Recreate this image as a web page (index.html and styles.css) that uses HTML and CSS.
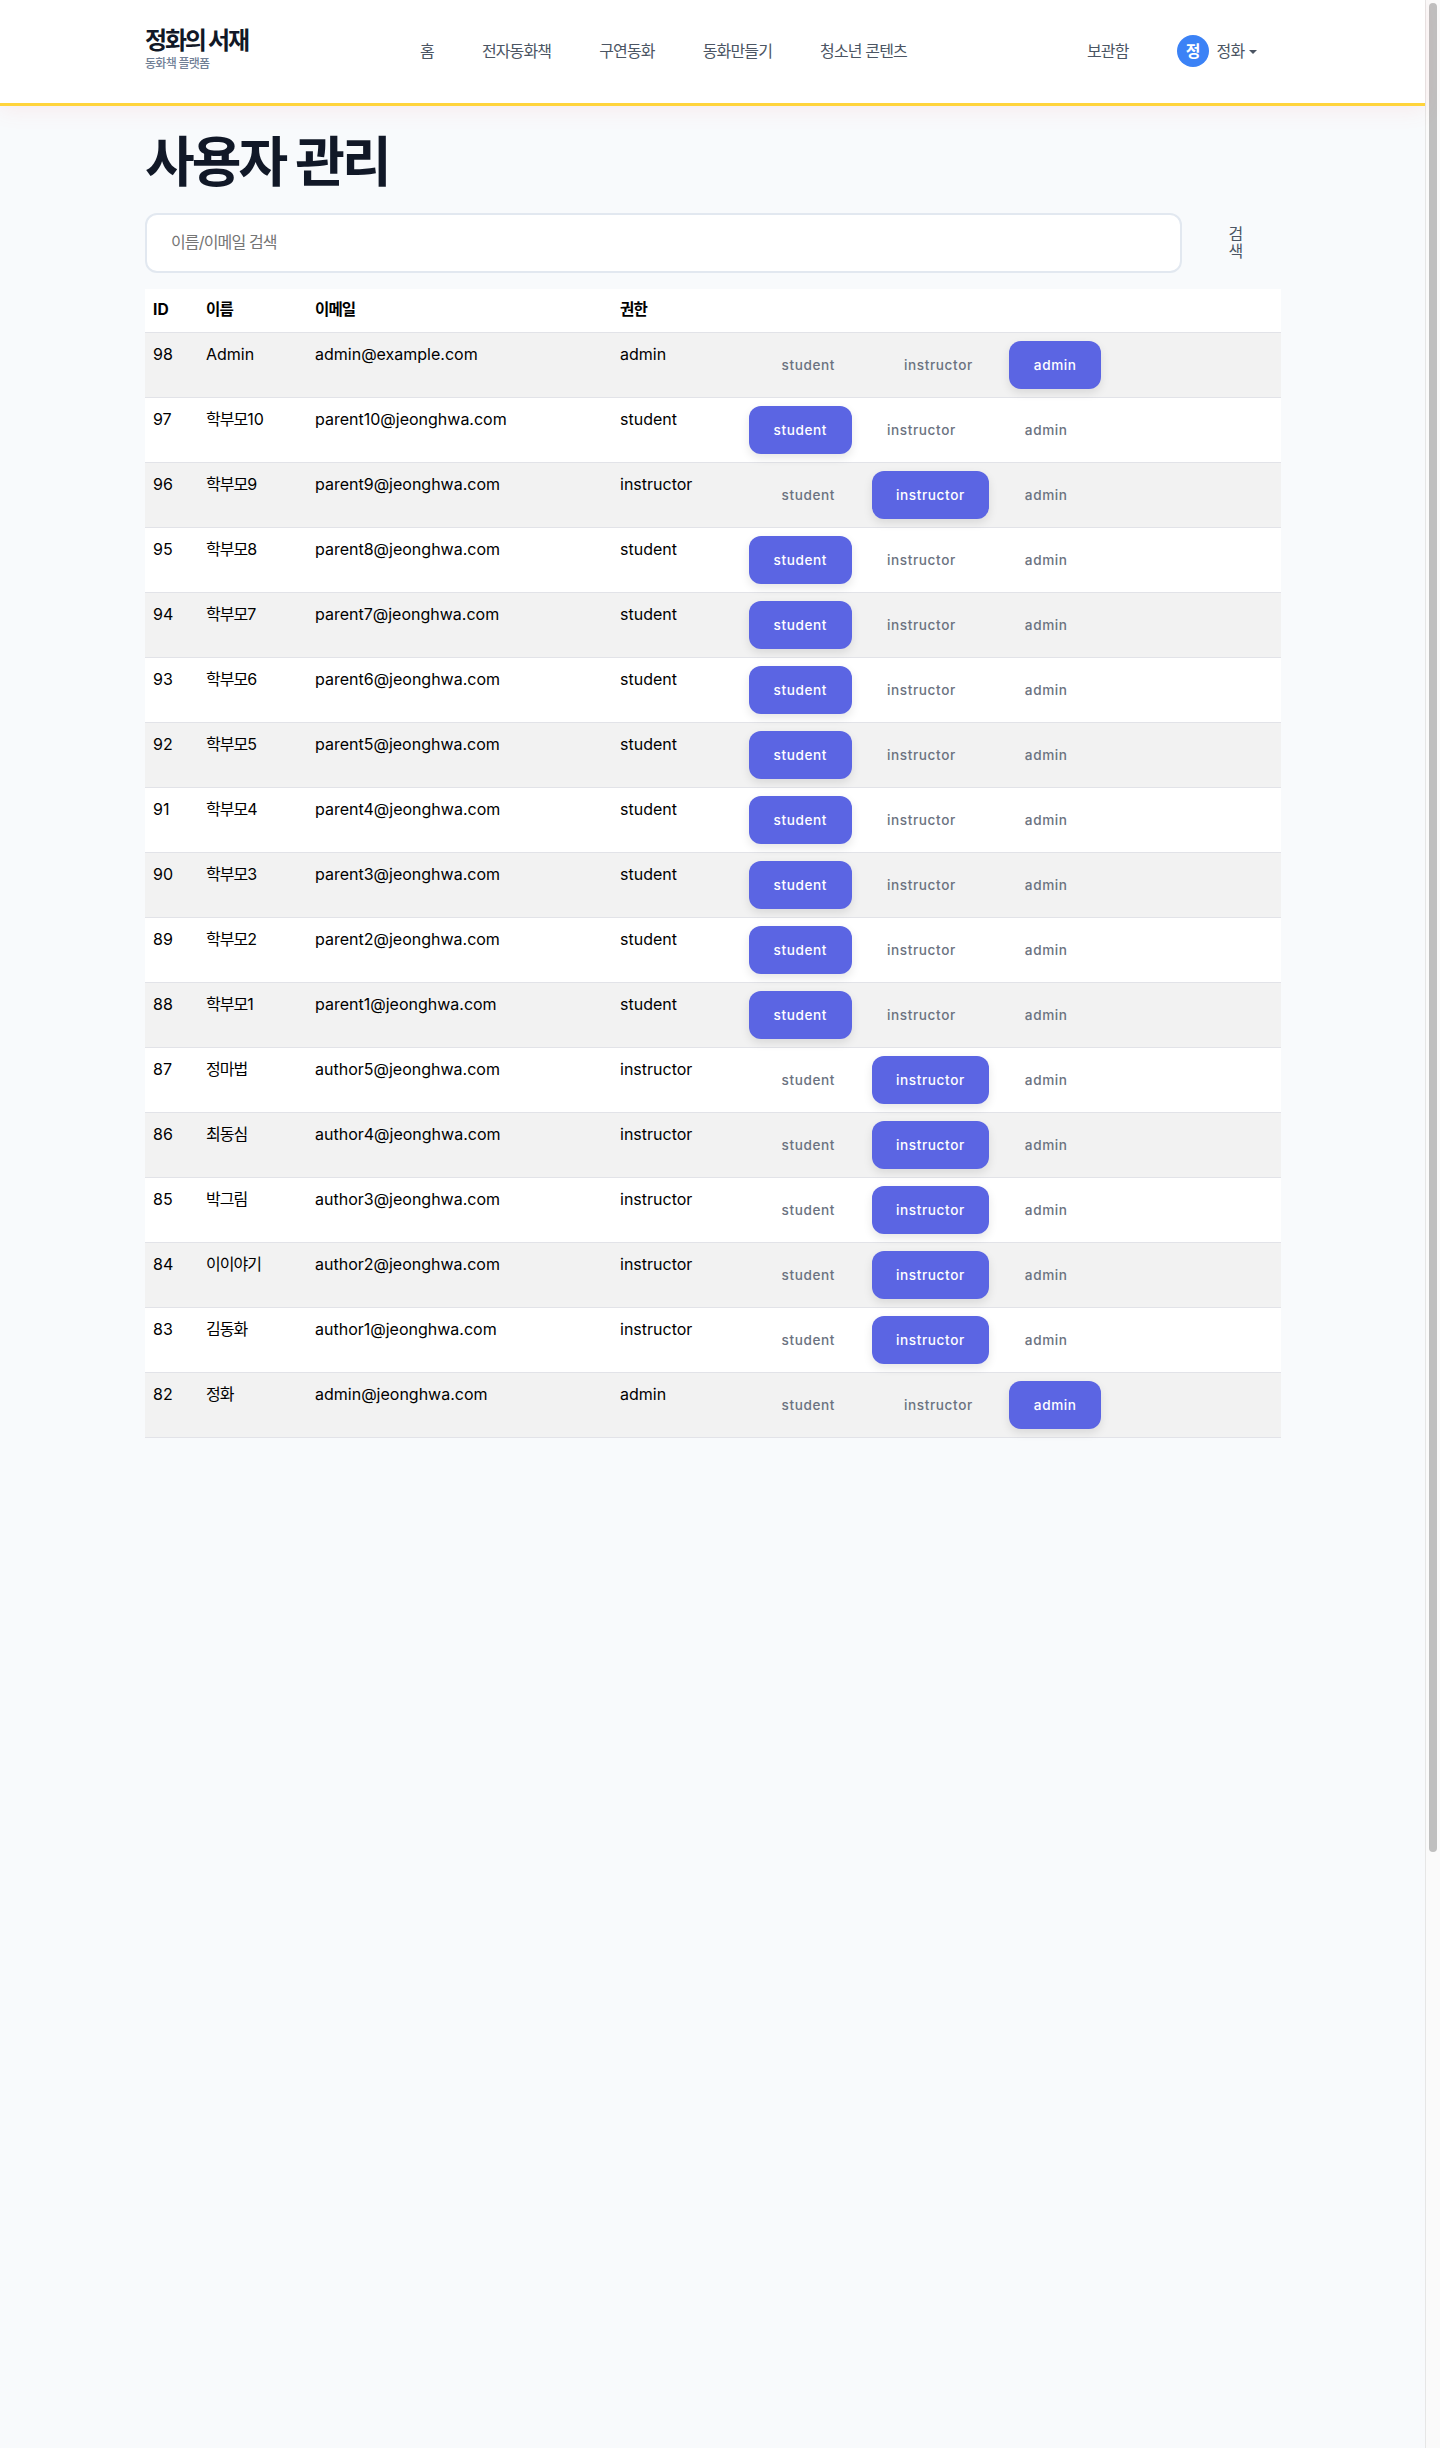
FILE: index.html
```html
<!DOCTYPE html>
<html lang="ko">
<head>
<meta charset="utf-8">
<title>사용자 관리</title>
<link rel="stylesheet" href="styles.css">
</head>
<body>
<div class="shell">
  <div class="page">
    <header class="header">
      <div class="brand">
        <div class="brand-title">정화의 서재</div>
        <div class="brand-sub">동화책 플랫폼</div>
      </div>
      <nav class="nav">
        <a>홈</a><a>전자동화책</a><a>구연동화</a><a>동화만들기</a><a>청소년 콘텐츠</a>
      </nav>
      <div class="user-area">
        <a class="library">보관함</a>
        <span class="avatar">정</span>
        <span class="user-name">정화</span>
        <span class="caret"></span>
      </div>
    </header>
    <main class="content">
      <h1 class="title">사용자 관리</h1>
      <form class="search">
        <input class="search-input" type="text" placeholder="이름/이메일 검색">
        <button class="search-btn" type="button">검색</button>
      </form>
      <table class="users">
        <colgroup><col class="c-id"><col class="c-name"><col class="c-email"><col class="c-role"><col></colgroup>
        <thead><tr><th>ID</th><th class="ko">이름</th><th class="ko">이메일</th><th class="ko">권한</th><th></th></tr></thead>
        <tbody>
          <tr><td>98</td><td>Admin</td><td>admin@example.com</td><td>admin</td><td class="actions"><button class="rb">student</button><button class="rb">instructor</button><button class="rb on">admin</button></td></tr>
          <tr><td>97</td><td><span class="ko">학부모</span>10</td><td>parent10@jeonghwa.com</td><td>student</td><td class="actions"><button class="rb on">student</button><button class="rb">instructor</button><button class="rb">admin</button></td></tr>
          <tr><td>96</td><td><span class="ko">학부모</span>9</td><td>parent9@jeonghwa.com</td><td>instructor</td><td class="actions"><button class="rb">student</button><button class="rb on">instructor</button><button class="rb">admin</button></td></tr>
          <tr><td>95</td><td><span class="ko">학부모</span>8</td><td>parent8@jeonghwa.com</td><td>student</td><td class="actions"><button class="rb on">student</button><button class="rb">instructor</button><button class="rb">admin</button></td></tr>
          <tr><td>94</td><td><span class="ko">학부모</span>7</td><td>parent7@jeonghwa.com</td><td>student</td><td class="actions"><button class="rb on">student</button><button class="rb">instructor</button><button class="rb">admin</button></td></tr>
          <tr><td>93</td><td><span class="ko">학부모</span>6</td><td>parent6@jeonghwa.com</td><td>student</td><td class="actions"><button class="rb on">student</button><button class="rb">instructor</button><button class="rb">admin</button></td></tr>
          <tr><td>92</td><td><span class="ko">학부모</span>5</td><td>parent5@jeonghwa.com</td><td>student</td><td class="actions"><button class="rb on">student</button><button class="rb">instructor</button><button class="rb">admin</button></td></tr>
          <tr><td>91</td><td><span class="ko">학부모</span>4</td><td>parent4@jeonghwa.com</td><td>student</td><td class="actions"><button class="rb on">student</button><button class="rb">instructor</button><button class="rb">admin</button></td></tr>
          <tr><td>90</td><td><span class="ko">학부모</span>3</td><td>parent3@jeonghwa.com</td><td>student</td><td class="actions"><button class="rb on">student</button><button class="rb">instructor</button><button class="rb">admin</button></td></tr>
          <tr><td>89</td><td><span class="ko">학부모</span>2</td><td>parent2@jeonghwa.com</td><td>student</td><td class="actions"><button class="rb on">student</button><button class="rb">instructor</button><button class="rb">admin</button></td></tr>
          <tr><td>88</td><td><span class="ko">학부모</span>1</td><td>parent1@jeonghwa.com</td><td>student</td><td class="actions"><button class="rb on">student</button><button class="rb">instructor</button><button class="rb">admin</button></td></tr>
          <tr><td>87</td><td class="ko">정마법</td><td>author5@jeonghwa.com</td><td>instructor</td><td class="actions"><button class="rb">student</button><button class="rb on">instructor</button><button class="rb">admin</button></td></tr>
          <tr><td>86</td><td class="ko">최동심</td><td>author4@jeonghwa.com</td><td>instructor</td><td class="actions"><button class="rb">student</button><button class="rb on">instructor</button><button class="rb">admin</button></td></tr>
          <tr><td>85</td><td class="ko">박그림</td><td>author3@jeonghwa.com</td><td>instructor</td><td class="actions"><button class="rb">student</button><button class="rb on">instructor</button><button class="rb">admin</button></td></tr>
          <tr><td>84</td><td class="ko">이이야기</td><td>author2@jeonghwa.com</td><td>instructor</td><td class="actions"><button class="rb">student</button><button class="rb on">instructor</button><button class="rb">admin</button></td></tr>
          <tr><td>83</td><td class="ko">김동화</td><td>author1@jeonghwa.com</td><td>instructor</td><td class="actions"><button class="rb">student</button><button class="rb on">instructor</button><button class="rb">admin</button></td></tr>
          <tr><td>82</td><td class="ko">정화</td><td>admin@jeonghwa.com</td><td>admin</td><td class="actions"><button class="rb">student</button><button class="rb">instructor</button><button class="rb on">admin</button></td></tr>
        </tbody>
      </table>
    </main>
  </div>
  <div class="scrollbar"><div class="thumb"></div></div>
</div>
</body>
</html>
```

FILE: styles.css
```css
* { box-sizing: border-box; }
html, body { margin: 0; padding: 0; height: 2448px; overflow: hidden; }
body {
  font-family: Inter, "Noto Sans CJK KR", sans-serif;
  font-size: 16px;
  color: #000;
  background: #f8fafc;
  text-rendering: optimizeLegibility;
}
.ko { letter-spacing: -0.96px; }
.shell { display: flex; height: 2448px; }
.page { flex: 1; min-width: 0; }

.scrollbar {
  width: 15px;
  background: #fafafa;
  border-left: 1px solid #e6e6e6;
  padding: 3px 3px 0 3px;
}
.thumb { width: 8px; height: 1849px; border-radius: 4px; background: #bfbfbf; }

.header {
  position: relative;
  height: 106px;
  display: flex;
  align-items: center;
  padding: 0 0 1px 145px;
  background: #fff;
  border-bottom: 3px solid #ffd43b;
  box-shadow: 0 4px 20px rgba(255, 107, 107, 0.1);
}
.brand { width: 105px; margin-bottom: 4px; }
.brand-title { font-size: 24px; line-height: 30px; font-weight: 700; letter-spacing: -2.2px; color: #111827; white-space: nowrap; }
.brand-sub { font-size: 12px; line-height: 16px; font-weight: 500; letter-spacing: -0.72px; color: #718096; white-space: nowrap; }
.nav { display: flex; gap: 48px; margin-left: 170px; font-size: 16px; line-height: 20px; letter-spacing: -0.85px; color: #4b5563; }
.user-area { display: flex; align-items: center; margin-left: 180px; font-size: 16px; line-height: 20px; letter-spacing: -0.85px; color: #4b5563; }
.library { margin-right: 48px; }
.avatar {
  width: 32px; height: 32px; border-radius: 50%;
  display: flex; align-items: center; justify-content: center;
  background: #3b82f6; color: #fff; font-weight: 600; font-size: 16px;
  margin-right: 8px;
}
.caret {
  margin-left: 5px; margin-top: 2px;
  border-left: 4px solid transparent; border-right: 4px solid transparent;
  border-top: 4px solid #4b5563;
}

.content { padding: 21px 0 0 145px; width: 1281px; }
.title {
  margin: 0 0 15px;
  font-size: 54px; line-height: 71px; font-weight: 700;
  letter-spacing: -2.9px; color: #111827;
}
.search { display: flex; height: 60px; margin-bottom: 16px; }
.search-input {
  width: 1037px; height: 60px;
  padding: 0 24px 2px;
  border: 2px solid #e2e8f0; border-radius: 12px;
  background: #fff;
  font: 16px Inter, "Noto Sans CJK KR", sans-serif;
  letter-spacing: -0.85px;
  outline: none;
}
.search-input::placeholder { color: #757575; opacity: 1; }
.search-btn {
  width: 15px; margin-left: 46px; padding: 0;
  border: 0; background: none;
  font: 16px/17px Inter, "Noto Sans CJK KR", sans-serif;
  letter-spacing: -0.85px;
  color: #4b5563;
  word-break: break-all;
}

.users { width: 1136px; table-layout: fixed; border-collapse: collapse; background: #fff; }
.c-id { width: 53px; }
.c-name { width: 109px; }
.c-email { width: 305px; }
.c-role { width: 129px; }
.users th {
  height: 43px; padding: 0 8px;
  text-align: left; font-size: 15.6px; font-weight: 700; line-height: 20px;
  border-bottom: 1px solid #e2e3e8;
}
.users td {
  height: 65px; padding: 9.5px 8px 0;
  vertical-align: top; line-height: 24px; font-size: 16px;
  border-bottom: 1px solid #e2e3e8;
}
.users tbody tr:nth-child(odd) { background: #f2f2f2; }
.users td.actions { padding: 8px 0 0 6px; white-space: nowrap; }
.rb {
  height: 48px; padding: 0 34.5px; margin: 0;
  border: 0; border-radius: 12px; background: none;
  font: 500 13.6px Inter, sans-serif; letter-spacing: 0.6px;
  color: #6b7280;
  vertical-align: top;
}
.rb.on {
  padding: 0 24.5px; margin: 0 1px 0 2px;
  background: #5b65e3; color: #fff; font-weight: 500;
  box-shadow: 0 4px 10px rgba(0, 0, 0, 0.1);
}
```
